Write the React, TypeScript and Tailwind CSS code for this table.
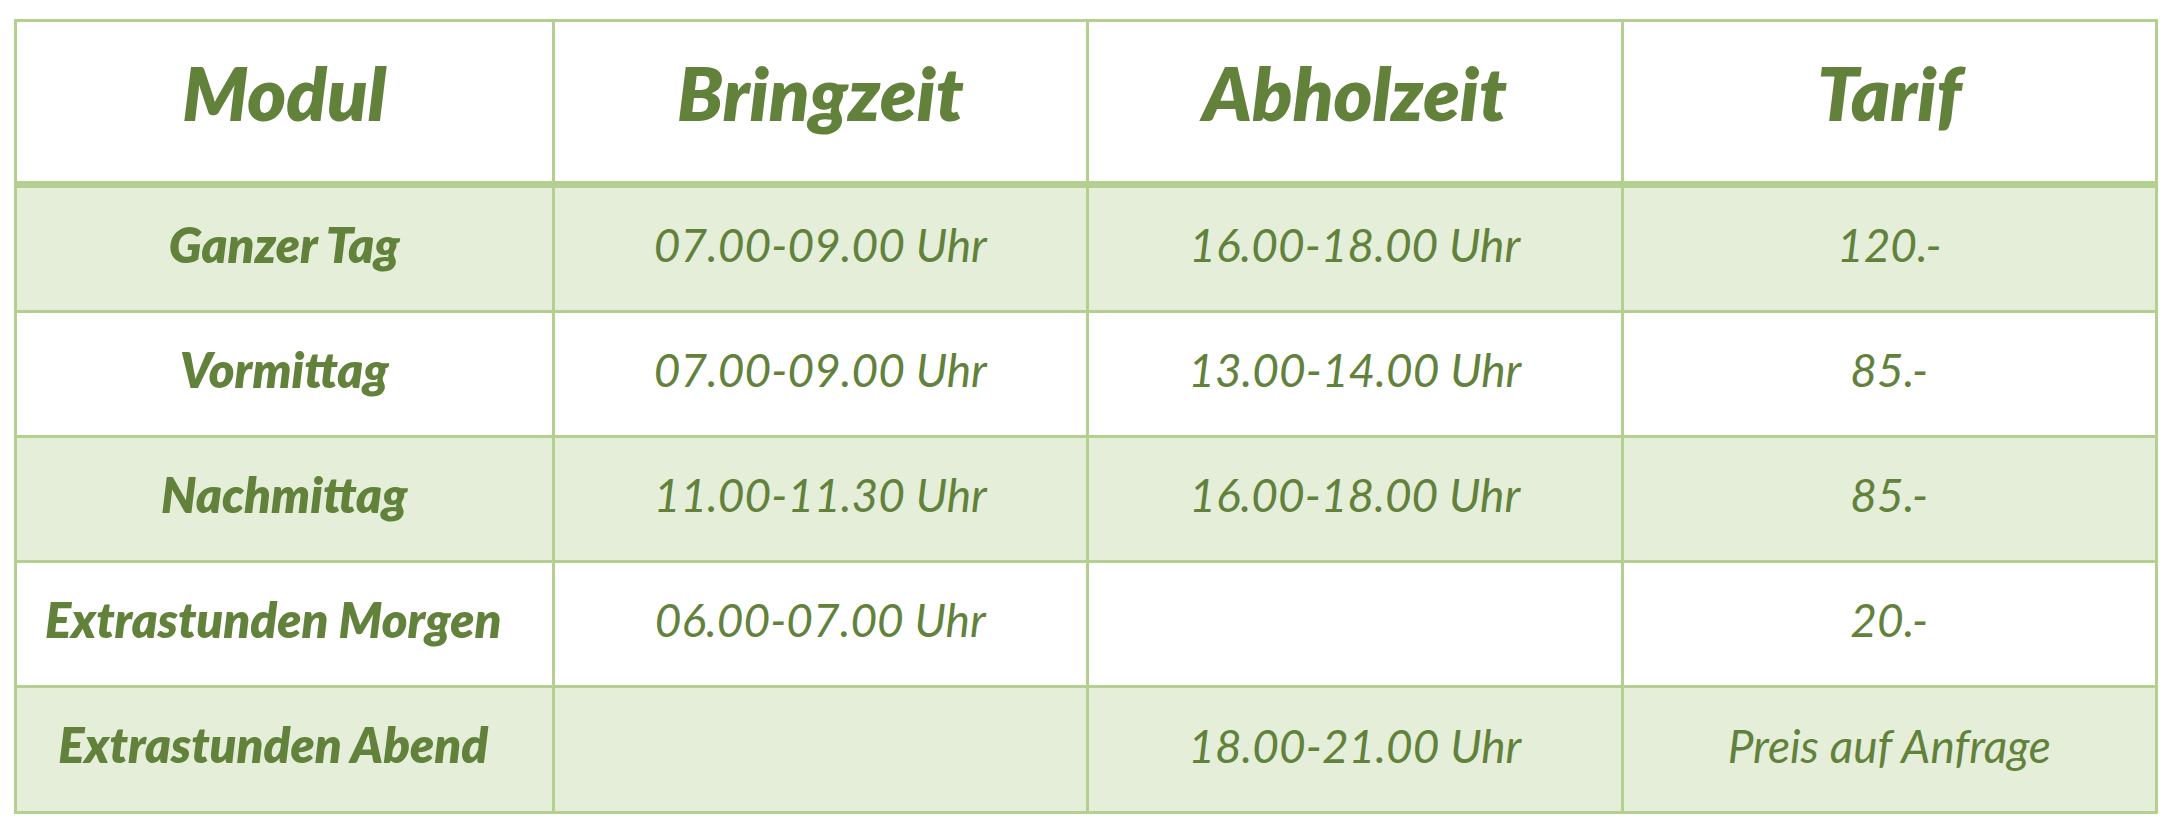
const rows = [
  { modul: "Ganzer Tag", bring: "07.00-09.00 Uhr", abhol: "16.00-18.00 Uhr", tarif: "120.-", shaded: true, long: false },
  { modul: "Vormittag", bring: "07.00-09.00 Uhr", abhol: "13.00-14.00 Uhr", tarif: "85.-", shaded: false, long: false },
  { modul: "Nachmittag", bring: "11.00-11.30 Uhr", abhol: "16.00-18.00 Uhr", tarif: "85.-", shaded: true, long: false },
  { modul: "Extrastunden Morgen", bring: "06.00-07.00 Uhr", abhol: "", tarif: "20.-", shaded: false, long: true },
  { modul: "Extrastunden Abend", bring: "", abhol: "18.00-21.00 Uhr", tarif: "Preis auf Anfrage", shaded: true, long: true },
];

const headers = ["Modul", "Bringzeit", "Abholzeit", "Tarif"];

export default function App() {
  return (
    <div className="min-h-screen bg-white pt-[19px] pl-[14px]" style={{ fontFamily: "Lato, 'Open Sans', sans-serif" }}>
      <div className="w-[2144px] border-[3px] border-[#b4d090] text-[#62813b] italic">
        {/* header */}
        <div className="grid grid-cols-4 h-[166px] border-b-[7px] border-[#b4d090]">
          {headers.map((h, i) => (
            <div
              key={h}
              className={`flex items-center justify-center pb-[18px] text-[74px] font-extrabold ${i > 0 ? "border-l-[3px] border-[#b4d090]" : ""}`}
            >
              {h}
            </div>
          ))}
        </div>

        {rows.map((r, idx) => (
          <div
            key={r.modul}
            className={`grid grid-cols-4 ${idx < rows.length - 1 ? "h-[125px] border-b-[3px] border-[#b4d090]" : "h-[123px]"} ${r.shaded ? "bg-[#e4eed9]" : "bg-white"}`}
          >
            <div className={`flex items-center justify-center pb-[9px] text-[49px] font-extrabold ${r.long ? "pr-[22px]" : ""}`}>
              {r.modul}
            </div>
            <div className="flex items-center justify-center pb-[9px] border-l-[3px] border-[#b4d090] text-[46px]">{r.bring}</div>
            <div className="flex items-center justify-center pb-[9px] border-l-[3px] border-[#b4d090] text-[46px]">{r.abhol}</div>
            <div className="flex items-center justify-center pb-[9px] border-l-[3px] border-[#b4d090] text-[46px]">{r.tarif}</div>
          </div>
        ))}
      </div>
    </div>
  );
}
